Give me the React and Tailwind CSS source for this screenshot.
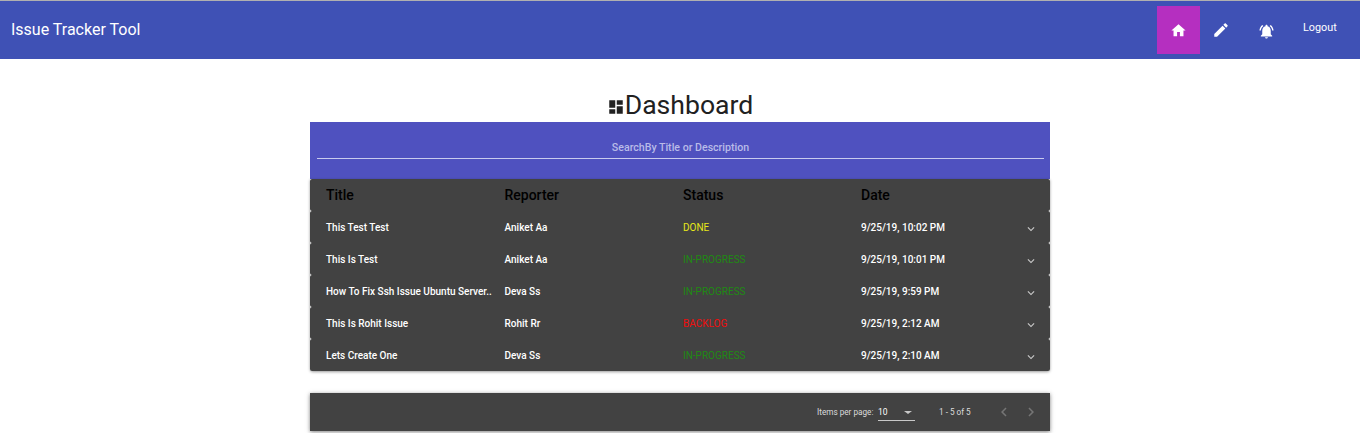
import React from 'react';

const font = { fontFamily: 'Roboto, sans-serif' };

const Icon = ({ d, className }) => (
  <svg viewBox="0 0 24 24" fill="currentColor" className={className}>
    <path d={d} />
  </svg>
);

const icons = {
  home: 'M10 20v-6h4v6h5v-8h3L12 3 2 12h3v8z',
  edit: 'M3 17.25V21h3.75L17.81 9.94l-3.75-3.75L3 17.25zM20.71 7.04c.39-.39.39-1.02 0-1.41l-2.34-2.34c-.39-.39-1.02-.39-1.41 0l-1.83 1.83 3.75 3.75 1.83-1.83z',
  bell: 'M7.58 4.08L6.15 2.65C3.75 4.48 2.17 7.3 2.03 10.5h2c.15-2.65 1.51-4.97 3.55-6.42zm12.39 6.42h2c-.15-3.2-1.73-6.02-4.12-7.85l-1.42 1.43c2.02 1.45 3.39 3.77 3.54 6.42zM18 11c0-3.07-1.64-5.64-4.5-6.32V4c0-.83-.67-1.5-1.5-1.5s-1.5.67-1.5 1.5v.68C7.63 5.36 6 7.92 6 11v5l-2 2v1h16v-1l-2-2v-5zm-6 11c.14 0 .27-.01.4-.04.65-.14 1.18-.58 1.44-1.18.1-.24.15-.5.15-.78h-4c.01 1.1.9 2 2.01 2z',
  dashboard: 'M3 13h8V3H3v10zm0 8h8v-6H3v6zm10 0h8V11h-8v10zm0-18v6h8V3h-8z',
  expand: 'M16.59 8.59L12 13.17 7.41 8.59 6 10l6 6 6-6z',
  prev: 'M15.41 7.41L14 6l-6 6 6 6 1.41-1.41L10.83 12z',
  next: 'M10 6L8.59 7.41 13.17 12l-4.58 4.59L10 18l6-6z',
};

const issues = [
  { title: 'This Test Test', reporter: 'Aniket Aa', status: 'DONE', color: 'text-[#e6e619]', date: '9/25/19, 10:02 PM' },
  { title: 'This Is Test', reporter: 'Aniket Aa', status: 'IN-PROGRESS', color: 'text-[#1f8a13]', date: '9/25/19, 10:01 PM' },
  { title: 'How To Fix Ssh Issue Ubuntu Server..', reporter: 'Deva Ss', status: 'IN-PROGRESS', color: 'text-[#1f8a13]', date: '9/25/19, 9:59 PM' },
  { title: 'This Is Rohit Issue', reporter: 'Rohit Rr', status: 'BACKLOG', color: 'text-[#f00d0d]', date: '9/25/19, 2:12 AM' },
  { title: 'Lets Create One', reporter: 'Deva Ss', status: 'IN-PROGRESS', color: 'text-[#1f8a13]', date: '9/25/19, 2:10 AM' },
];

const App = () => {
  return (
    <div className="h-[433px] overflow-hidden bg-white" style={font}>
      {/* Toolbar */}
      <div className="h-[59px] border-t border-[#b0b0b0] bg-[#3f51b5] flex items-center text-white">
        <div className="pl-[11px] text-base leading-none flex-grow">Issue Tracker Tool</div>
        <div className="flex items-center">
          <div className="w-[43px] h-[48px] bg-[#b52fc0] flex items-center justify-center">
            <Icon d={icons.home} className="w-[17px] h-[17px]" />
          </div>
          <div className="w-[43px] h-[48px] flex items-center justify-center">
            <Icon d={icons.edit} className="w-[18px] h-[18px] mr-[1px]" />
          </div>
          <div className="w-[47px] h-[48px] flex items-center justify-center">
            <Icon d={icons.bell} className="w-[17px] h-[17px] mt-[2px]" />
          </div>
          <div className="w-[70px] pl-[13px] text-[10.8px] font-normal leading-none mb-[3px]">Logout</div>
        </div>
      </div>

      <div className="w-[740px] mx-auto">
        <h1 className="mt-[31px] h-[32px] flex items-center justify-center text-[26.6px] leading-none text-[#212121] font-normal">
          <Icon d={icons.dashboard} className="w-[18px] h-[18px] mt-[2px]" />
          <span className="pb-[2px]">Dashboard</span>
        </h1>

        {/* Search */}
        <div className="h-[57px] bg-[#4f51bf] pl-[7px] pr-[6px] pt-[18px]">
          <div className="h-[19px] border-b border-[#c9cbee] text-center text-[10.6px] leading-[15px] font-medium text-[#b9bbe8]">
            SearchBy Title or Description
          </div>
        </div>

        {/* Issue list */}
        <div className="shadow-[0_1px_3px_rgba(0,0,0,0.4)] rounded-b-[3px]">
          <div className="h-[32px] bg-[#424242] rounded-[2px] pl-[16px] grid grid-cols-[178.5px_178.5px_178px_1fr] items-center text-[14px] font-medium leading-none text-black">
            <div>Title</div>
            <div>Reporter</div>
            <div>Status</div>
            <div>Date</div>
          </div>
          {issues.map((issue) => (
            <div
              key={issue.title}
              className="h-[32px] bg-[#424242] rounded-[2px] pl-[16px] pt-[2px] grid grid-cols-[178.5px_178.5px_178px_1fr_26px] items-center text-[10px] leading-none text-white"
            >
              <div className="font-medium">{issue.title}</div>
              <div className="font-medium">{issue.reporter}</div>
              <div className={issue.color}>{issue.status}</div>
              <div className="font-medium">{issue.date}</div>
              <Icon d={icons.expand} className="w-[14px] h-[14px] text-[#c8c8c8] mt-[1px]" />
            </div>
          ))}
        </div>

        {/* Paginator */}
        <div className="mt-[22px] h-[38px] bg-[#424242] shadow-[0_1px_4px_rgba(0,0,0,0.5)] flex items-center text-[8.2px] leading-none text-[#dcdcdc]">
          <div className="ml-[507px] w-[56px] whitespace-nowrap">Items per page:</div>
          <div className="ml-[5px] mt-[2px] w-[37px] h-[15px] border-b border-[#c8c8c8] flex items-start justify-between text-white">
            <span className="text-[8.5px] mt-[2px]">10</span>
            <span className="mt-[5px] mr-[3px] w-0 h-0 border-x-[4px] border-x-transparent border-t-[3px] border-t-[#c8c8c8]"></span>
          </div>
          <div className="ml-[24px] w-[31px] whitespace-nowrap">1 - 5 of 5</div>
          <Icon d={icons.prev} className="ml-[25px] w-[18px] h-[18px] text-[#757575]" />
          <Icon d={icons.next} className="ml-[9px] w-[18px] h-[18px] text-[#757575]" />
        </div>
      </div>
    </div>
  );
};

export default App;
